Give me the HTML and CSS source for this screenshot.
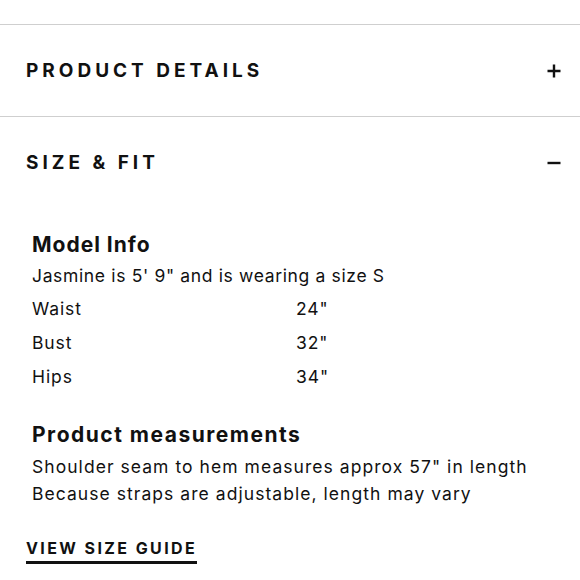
FILE: index.html
```html
<!DOCTYPE html>
<html>
<head>
<meta charset="utf-8">
<link rel="stylesheet" href="styles.css">
</head>
<body>
<div class="page">
  <section class="acc">
    <div class="acc-head">
      <span class="acc-title">PRODUCT DETAILS</span>
      <svg class="acc-icon" width="14" height="14" viewBox="0 0 14 14"><path d="M7 0.5V13.5M0.5 7H13.5" stroke="#111" stroke-width="2.4" fill="none"/></svg>
    </div>
  </section>
  <section class="acc">
    <div class="acc-head">
      <span class="acc-title">SIZE &amp; FIT</span>
      <svg class="acc-icon" width="14" height="14" viewBox="0 0 14 14"><path d="M0.5 7H13.5" stroke="#111" stroke-width="2.4" fill="none"/></svg>
    </div>
    <div class="acc-body">
      <h3 class="sub">Model Info</h3>
      <p class="intro">Jasmine is 5' 9" and is wearing a size S</p>
      <div class="meas">
        <span>Waist</span><span>24"</span>
        <span>Bust</span><span>32"</span>
        <span>Hips</span><span>34"</span>
      </div>
      <h3 class="sub sub-second">Product measurements</h3>
      <p class="desc">Shoulder seam to hem measures approx 57" in length<br>Because straps are adjustable, length may vary</p>
      <a class="guide" href="#">VIEW SIZE GUIDE</a>
    </div>
  </section>
</div>
</body>
</html>
```
FILE: styles.css
```css
html, body {
  margin: 0;
  padding: 0;
  background: #fff;
}
body {
  font-family: Inter, "Noto Sans", sans-serif;
  color: #111;
}
.page {
  padding-top: 24px;
}
.acc {
  border-top: 1px solid #cfcfcf;
}
.acc-head {
  height: 91px;
  display: flex;
  align-items: center;
  justify-content: space-between;
  padding: 0 19px 0 26px;
}
.acc-title {
  font-size: 19px;
  font-weight: 700;
  letter-spacing: 4px;
}
.acc-icon {
  display: block;
}
.acc-body {
  padding: 22px 0 0 32px;
}
.sub {
  margin: 0;
  font-size: 21px;
  font-weight: 700;
  letter-spacing: 1px;
  line-height: 30px;
}
.intro,
.meas,
.desc {
  font-size: 17.5px;
  letter-spacing: 0.9px;
}
.intro {
  margin: 0;
  line-height: 32px;
  letter-spacing: 0.65px;
}
.meas {
  display: grid;
  grid-template-columns: 264px auto;
  line-height: 34px;
}
.sub-second {
  margin-top: 26px;
  letter-spacing: 1.5px;
}
.desc {
  margin: 3px 0 0;
  line-height: 27px;
  letter-spacing: 1.05px;
}
.guide {
  display: inline-block;
  margin: 31px 0 0 -6px;
  font-size: 16px;
  font-weight: 700;
  letter-spacing: 2.4px;
  color: #111;
  text-decoration: none;
  line-height: 20px;
  padding-bottom: 3px;
  border-bottom: 3px solid #111;
}
```
